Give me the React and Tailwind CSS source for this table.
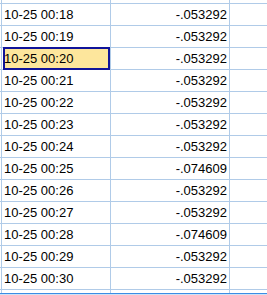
import React from 'react';

const rows = [
  ['10-25 00:18', '-.053292'],
  ['10-25 00:19', '-.053292'],
  ['10-25 00:20', '-.053292'],
  ['10-25 00:21', '-.053292'],
  ['10-25 00:22', '-.053292'],
  ['10-25 00:23', '-.053292'],
  ['10-25 00:24', '-.053292'],
  ['10-25 00:25', '-.074609'],
  ['10-25 00:26', '-.053292'],
  ['10-25 00:27', '-.053292'],
  ['10-25 00:28', '-.074609'],
  ['10-25 00:29', '-.053292'],
  ['10-25 00:30', '-.053292'],
];

const SELECTED = 2;

export default function App() {
  return (
    <div className="w-[267px] h-[295px] overflow-hidden bg-white text-black font-['Liberation_Sans',Arial,sans-serif] text-[13px]">
      {/* partial row above */}
      <div className="h-[4px] flex pl-px border-b border-[#b0cbe8]">
        <div className="w-[110px] border-x border-[#b0cbe8]" />
        <div className="w-[119px] border-r border-[#b0cbe8]" />
      </div>

      {rows.map(([time, value], i) => (
        <div key={i} className="h-[22px] flex pl-px border-b border-[#b0cbe8]">
          <div className="relative w-[110px] border-x border-[#b0cbe8] flex items-center pl-[2px]">
            {i === SELECTED && (
              <div className="absolute -top-px -bottom-px left-px right-0 border-2 border-[#10149a] bg-[#fde69c]" />
            )}
            <span className="relative">{time}</span>
          </div>
          <div className="w-[119px] border-r border-[#b0cbe8] flex items-center justify-end pr-[2px]">
            {value}
          </div>
        </div>
      ))}

      <div className="h-[3px] flex pl-px">
        <div className="w-[110px] border-x border-[#b0cbe8]" />
        <div className="w-[119px] border-r border-[#b0cbe8]" />
      </div>
      <div className="h-[2px] border-t border-[#3c8de4] bg-[#cfe2f6]" />
    </div>
  );
}
